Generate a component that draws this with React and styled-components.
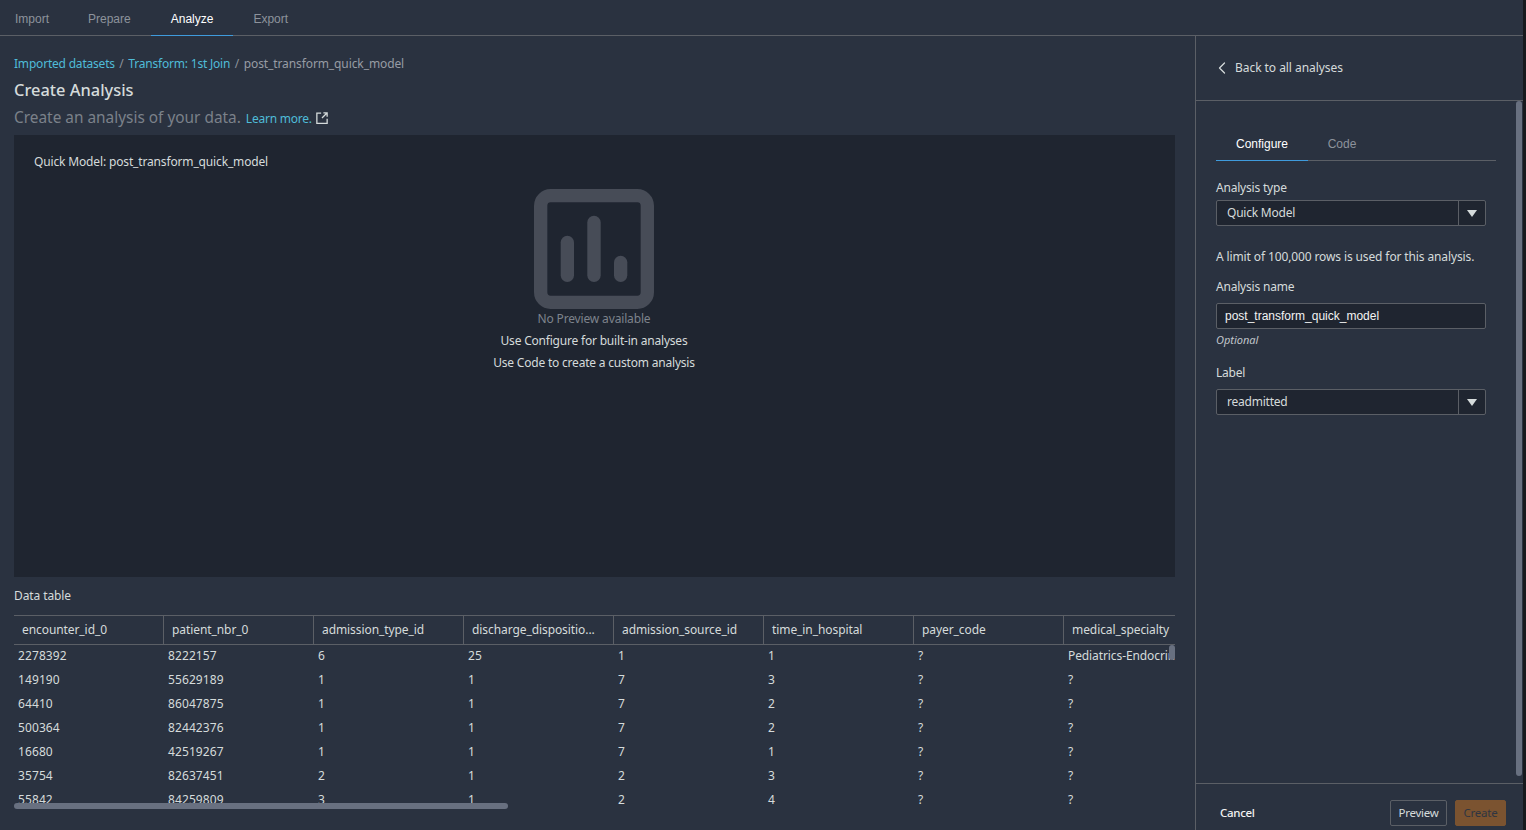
import React from "react";
import styled, { createGlobalStyle } from "styled-components";
import { ChevronLeft } from "lucide-react";

const Global = createGlobalStyle`
  html, body { margin: 0; padding: 0; height: 100%; background: #2a3240; overflow: hidden; }
  * { box-sizing: border-box; }
`;

const ui = `"Noto Sans", "Open Sans", sans-serif`;
const helv = `"Liberation Sans", Arial, sans-serif`;

const Page = styled.div`
  width: 1526px; height: 830px; display: flex; flex-direction: column;
  background: #2a3240; color: #d5dbdb; font-family: ${ui}; font-size: 12px; overflow: hidden;
  border-right: 3px solid #17191d;
`;
const TopTabs = styled.nav`
  height: 36px; flex: none; display: flex; border-bottom: 1px solid #5b5f66;
`;
const TopTab = styled.div`
  height: 36px; display: flex; align-items: center; padding: 3px 20px 0; font: 12px ${helv};
  color: ${p => (p.$active ? "#ffffff" : "#8d939c")};
  border-bottom: 1px solid ${p => (p.$active ? "#3f9bdc" : "transparent")};
  &:first-child { padding-left: 15px; padding-right: 19px; }
`;
const Body = styled.div`
  flex: 1; display: flex; min-height: 0;
`;
const Main = styled.main`
  width: 1195px; flex: none; display: flex; flex-direction: column; padding: 0 20px 0 14px;
`;
const Crumbs = styled.div`
  display: flex; gap: 4.5px; margin-top: 19px; height: 17px; line-height: 17px; font-size: 12px; color: #8d939c;
`;
const Crumb = styled.span`
  color: ${p => (p.$link ? "#4fbcd8" : "#979ca4")};
  letter-spacing: ${p => (p.$link ? "-0.2px" : "-0.1px")};
`;
const Title = styled.h1`
  margin: 6px 0 0; font-size: 16.4px; line-height: 24px; font-weight: 500; color: #d5dbdb; height: 24px;
`;
const Sub = styled.div`
  display: flex; align-items: center; margin-top: 3px; height: 24px; font-size: 15.4px; color: #7b818a;
`;
const Learn = styled.a`
  display: flex; align-items: center; gap: 4px; margin-left: 5px; margin-top: 2px; font-size: 12px;
  letter-spacing: -0.23px; color: #4fbcd8;
`;
const Preview = styled.section`
  height: 442px; flex: none; margin-top: 6px; background: #1f2530; padding: 17px 21px 16px 20px;
  display: flex; flex-direction: column; align-items: center;
`;
const PreviewTitle = styled.div`
  align-self: flex-start; height: 20px; line-height: 20px; font-size: 12px; letter-spacing: -0.15px; color: #d5dbdb;
`;
const Chart = styled.svg`
  display: block; flex: none; width: 120px; height: 120px; margin-top: 17px; color: #474c57;
`;
const NoPrev = styled.div`
  height: 20px; line-height: 20px; color: #7d838c; font-size: 12px; letter-spacing: -0.15px;
`;
const Hint = styled.div`
  height: 22px; line-height: 22px; color: #d5dbdb; font-size: 12px; letter-spacing: -0.2px;
  margin-top: ${p => p.$mt || 0}px;
`;
const TableLabel = styled.div`
  height: 18px; line-height: 18px; margin-top: 10px; font-size: 12px; letter-spacing: -0.1px; color: #d5dbdb;
`;
const TableWrap = styled.div`
  position: relative; margin-top: 10px; height: 194px;
`;
const TableClip = styled.div`
  height: 190px; overflow: hidden;
`;
const HeadRow = styled.div`
  display: flex; height: 30px; border-top: 1px solid #5b5f66; border-bottom: 1px solid #5b5f66;
`;
const HeadCell = styled.div`
  width: 150px; flex: none; padding: 0 8px; line-height: 28px; font-size: 12px; letter-spacing: -0.08px; color: #d5dbdb;
  white-space: nowrap; overflow: hidden; border-right: 1px solid #5b5f66;
  &:last-child { border-right: 0; width: 111px; }
`;
const Row = styled.div`
  display: flex; height: 24px;
`;
const Cell = styled.div`
  width: 150px; flex: none; padding: 0 4px; line-height: 22px; height: 24px; font-size: 12px; letter-spacing: 0.1px; color: #d5dbdb;
  white-space: nowrap; overflow: hidden;
  &:last-child { width: 111px; letter-spacing: -0.1px; }
`;
const HScroll = styled.div`
  position: absolute; left: 0; bottom: 0; width: 494px; height: 6px; border-radius: 3px; background: #687080;
`;
const VScroll = styled.div`
  position: absolute; right: 0; top: 30px; width: 6px; height: 15px; border-radius: 3px; background: #687080;
`;
const Side = styled.aside`
  position: relative; flex: 1; display: flex; flex-direction: column; border-left: 1px solid #5b5f66;
`;
const Back = styled.div`
  height: 65px; flex: none; display: flex; align-items: center; gap: 3px; padding: 0 0 1px 16px;
  border-bottom: 1px solid #5b5f66; font-size: 12px; letter-spacing: -0.05px; color: #d5dbdb;
`;
const SideBody = styled.div`
  position: relative; flex: 1; padding: 25px 0 0 20px;
`;
const SideScroll = styled.div`
  position: absolute; right: 1px; top: 0; width: 6px; height: 675px; border-radius: 3px; background: #687080;
`;
const SideTabs = styled.div`
  width: 280px; height: 35px; display: flex; border-bottom: 1px solid #5b5f66;
`;
const SideTab = styled.div`
  width: ${p => p.$w}px; height: 35px; display: flex; align-items: center; justify-content: center;
  padding-top: 1px; font: 12px ${helv};
  color: ${p => (p.$active ? "#ffffff" : "#8d939c")};
  border-bottom: 1px solid ${p => (p.$active ? "#3f9bdc" : "transparent")};
`;
const Label = styled.div`
  height: 16px; line-height: 16px; font-size: 12px; letter-spacing: -0.2px; color: #d5dbdb; margin-top: ${p => p.$mt}px;
`;
const Select = styled.div`
  width: 270px; height: 26px; display: flex; margin-top: ${p => p.$mt}px;
  background: #1f2530; border: 1px solid #5b5f66; border-radius: 2px;
`;
const SelectValue = styled.div`
  flex: 1; padding-left: 10px; line-height: 24px; font-size: 12px; letter-spacing: -0.22px; color: #d5dbdb;
`;
const SelectBtn = styled.div`
  width: 27px; display: flex; align-items: center; justify-content: center; border-left: 1px solid #5b5f66;
`;
const Caret = styled.svg`
  display: block; width: 10px; height: 7px; fill: #d5dbdb;
`;
const Note = styled.div`
  margin-top: 22px; height: 18px; line-height: 18px; font-size: 12px; letter-spacing: -0.12px; color: #d5dbdb;
`;
const TextInput = styled.div`
  width: 270px; height: 26px; margin-top: 8px; padding-left: 8px;
  background: #1f2530; border: 1px solid #5b5f66; border-radius: 2px;
  font: 12px/24px ${helv}; color: #f2f3f3;
`;
const Optional = styled.div`
  margin-top: 3px; height: 16px; line-height: 16px; font-size: 11px; font-style: italic; color: #c0c5ca;
`;
const Footer = styled.footer`
  height: 47px; flex: none; display: flex; align-items: center; justify-content: flex-end; gap: 8px;
  border-top: 1px solid #5b5f66; padding: 12px 17px 0 24px;
`;
const Cancel = styled.div`
  margin-right: auto; padding-bottom: 2px; font-size: 11.5px; font-weight: 500; letter-spacing: -0.3px; color: #f2f3f3;
`;
const Btn = styled.div`
  height: 26px; width: ${p => p.$w}px; display: flex; align-items: center; justify-content: center;
  padding-bottom: 1px; font-size: 11.5px; letter-spacing: -0.25px; border-radius: 2px;
  color: ${p => (p.$primary ? "#2f3541" : "#d5dbdb")};
  background: ${p => (p.$primary ? "#7b5330" : "transparent")};
  border: 1px solid ${p => (p.$primary ? "#7b5330" : "#5b5f66")};
`;

const heads = ["encounter_id_0","patient_nbr_0","admission_type_id","discharge_dispositio...","admission_source_id","time_in_hospital","payer_code","medical_specialty"];
const rows = [
  ["2278392","8222157","6","25","1","1","?","Pediatrics-Endocrinology"],
  ["149190","55629189","1","1","7","3","?","?"],
  ["64410","86047875","1","1","7","2","?","?"],
  ["500364","82442376","1","1","7","2","?","?"],
  ["16680","42519267","1","1","7","1","?","?"],
  ["35754","82637451","2","1","2","3","?","?"],
  ["55842","84259809","3","1","2","4","?","?"],
];

const CaretIcon = () => (
  <Caret viewBox="0 0 10 7"><polygon points="0,0 10,0 5,7" /></Caret>
);

export default function App() {
  return (
    <Page>
      <Global />
      <TopTabs>
        <TopTab>Import</TopTab>
        <TopTab>Prepare</TopTab>
        <TopTab $active>Analyze</TopTab>
        <TopTab>Export</TopTab>
      </TopTabs>
      <Body>
        <Main>
          <Crumbs>
            <Crumb $link>Imported datasets</Crumb><span>/</span>
            <Crumb $link>Transform: 1st Join</Crumb><span>/</span>
            <Crumb>post_transform_quick_model</Crumb>
          </Crumbs>
          <Title>Create Analysis</Title>
          <Sub>
            Create an analysis of your data.
            <Learn>
              Learn more.
              <svg width="12" height="12" viewBox="0 0 14 14" fill="none" stroke="#d5dbdb" strokeWidth="1.5">
                <path d="M6 1.2H1v12h12V8" />
                <path d="M7 7 12.8 1.2M8.6 1H13v4.4" />
              </svg>
            </Learn>
          </Sub>
          <Preview>
            <PreviewTitle>Quick Model: post_transform_quick_model</PreviewTitle>
            <Chart viewBox="0 0 120 120">
              <rect x="6.67" y="6.67" width="106.66" height="106.66" rx="10" fill="none" stroke="currentColor" strokeWidth="13.33" />
              <rect x="26.7" y="46.7" width="13.3" height="46.3" rx="6.65" fill="currentColor" />
              <rect x="53.3" y="26.7" width="13.4" height="66.3" rx="6.7" fill="currentColor" />
              <rect x="80" y="66.7" width="13.3" height="26.3" rx="6.65" fill="currentColor" />
            </Chart>
            <NoPrev>No Preview available</NoPrev>
            <Hint $mt={1}>Use Configure for built-in analyses</Hint>
            <Hint>Use Code to create a custom analysis</Hint>
          </Preview>
          <TableLabel>Data table</TableLabel>
          <TableWrap>
            <TableClip>
              <HeadRow>
                {heads.map(h => <HeadCell key={h}>{h}</HeadCell>)}
              </HeadRow>
              {rows.map(r => (
                <Row key={r[0]}>
                  {r.map((c, i) => <Cell key={i}>{c}</Cell>)}
                </Row>
              ))}
            </TableClip>
            <HScroll />
            <VScroll />
          </TableWrap>
        </Main>
        <Side>
          <Back>
            <ChevronLeft size={20} strokeWidth={1.5} color="#d5dbdb" />
            Back to all analyses
          </Back>
          <SideBody>
            <SideTabs>
              <SideTab $w={92} $active>Configure</SideTab>
              <SideTab $w={68}>Code</SideTab>
            </SideTabs>
            <Label $mt={19}>Analysis type</Label>
            <Select $mt={4}>
              <SelectValue>Quick Model</SelectValue>
              <SelectBtn><CaretIcon /></SelectBtn>
            </Select>
            <Note>A limit of 100,000 rows is used for this analysis.</Note>
            <Label $mt={13}>Analysis name</Label>
            <TextInput>post_transform_quick_model</TextInput>
            <Optional>Optional</Optional>
            <Label $mt={17}>Label</Label>
            <Select $mt={8}>
              <SelectValue>readmitted</SelectValue>
              <SelectBtn><CaretIcon /></SelectBtn>
            </Select>
            <SideScroll />
          </SideBody>
          <Footer>
            <Cancel>Cancel</Cancel>
            <Btn $w={57}>Preview</Btn>
            <Btn $w={51} $primary>Create</Btn>
          </Footer>
        </Side>
      </Body>
    </Page>
  );
}
